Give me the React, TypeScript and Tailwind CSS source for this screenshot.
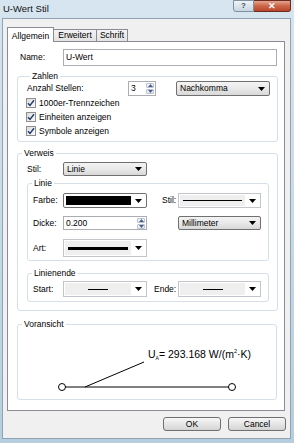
import React from "react";

// Small black triangle used by the drop-down boxes
const Arrow = () => (
  <svg width="7" height="4" viewBox="0 0 7 4" className="shrink-0">
    <polygon points="0,0 7,0 3.5,4" fill="#000" />
  </svg>
);

const SpinArrow = ({ up }: { up?: boolean }) => (
  <svg width="5" height="3" viewBox="0 0 5 3">
    <polygon points={up ? "0,3 5,3 2.5,0" : "0,0 5,0 2.5,3"} fill="#4d6185" />
  </svg>
);

const Combo = ({ text, className }: { text: string; className: string }) => (
  <div
    className={`flex items-center justify-between rounded-[2px] border border-[#707070] bg-gradient-to-b from-[#f3f3f3] via-[#e9e9e9] to-[#d8d8d8] pl-[3px] pr-[4px] ${className}`}
  >
    <span>{text}</span>
    <Arrow />
  </div>
);

const LineCombo = ({ className, thick }: { className: string; thick?: boolean }) => (
  <div className={`flex items-center border border-[#c2c5ca] bg-white p-[1px] ${className}`}>
    <div className="flex h-full flex-1 items-center justify-center bg-[#efefef] px-[3px]">
      <div className={`w-full bg-black ${thick ? "h-[3px]" : "h-px"}`} />
    </div>
    <div className="flex w-[14px] justify-center">
      <Arrow />
    </div>
  </div>
);

const EndCombo = ({ className }: { className: string }) => (
  <div className={`flex items-center border border-[#c2c5ca] bg-white p-[1px] ${className}`}>
    <div className="flex h-full flex-1 items-center justify-center bg-[#efefef]">
      <div className="h-px w-[20px] bg-black" />
    </div>
    <div className="flex w-[14px] justify-center">
      <Arrow />
    </div>
  </div>
);

const Spin = ({ value, className }: { value: string; className: string }) => (
  <div className={`flex items-stretch border border-[#abadb3] bg-white ${className}`}>
    <span className="flex flex-1 items-center pl-[2px]">{value}</span>
    <div className="flex w-[10px] flex-col gap-px p-px">
      <div className="flex flex-1 items-center justify-center rounded-[1px] border border-[#b9c4d3] bg-gradient-to-b from-[#f7f9fb] to-[#e3e9f0]">
        <SpinArrow up />
      </div>
      <div className="flex flex-1 items-center justify-center rounded-[1px] border border-[#b9c4d3] bg-gradient-to-b from-[#f7f9fb] to-[#e3e9f0]">
        <SpinArrow />
      </div>
    </div>
  </div>
);

const Check = ({ label }: { label: string }) => (
  <div className="flex h-[14px] items-center gap-[3px]">
    <div className="flex h-[10px] w-[10px] items-center justify-center border border-[#8f8f8f] bg-gradient-to-br from-[#dcdcdc] to-[#fbfbfb]">
      <svg width="8" height="8" viewBox="0 0 8 8">
        <path d="M1 4.2 L3 6.4 L7 1.2" stroke="#1f3a6e" strokeWidth="1.4" fill="none" />
      </svg>
    </div>
    <span>{label}</span>
  </div>
);

const Group = ({
  title,
  className,
  children,
}: {
  title: string;
  className: string;
  children: React.ReactNode;
}) => (
  <fieldset className={`rounded-[3px] border border-[#d5dfe5] ${className}`}>
    <legend className="ml-[4px] px-[2px] leading-[10px]">{title}</legend>
    {children}
  </fieldset>
);

const Button = ({ text }: { text: string }) => (
  <div className="flex h-[14px] w-[58px] items-center justify-center rounded-[3px] border border-[#707070] bg-gradient-to-b from-[#f6f6f6] via-[#e6e6e6] to-[#d3d3d3]">
    {text}
  </div>
);

export default function App() {
  return (
    <div className="flex h-[443px] w-[294px] flex-col overflow-hidden bg-gradient-to-b from-[#d6e5ef] via-[#c6dae7] to-[#b6cedd] font-['Liberation_Sans',Arial,sans-serif] text-[8.5px] text-black">
      {/* Title bar */}
      <div className="flex h-[18px] shrink-0 items-start justify-between">
        <span className="pl-[3px] pt-[3px] text-[9.5px] leading-[11px] text-[#111]">U-Wert Stil</span>
        <div className="mr-[3px] flex">
          <div className="flex h-[12px] w-[21px] items-center justify-center rounded-bl-[3px] border border-[#7f8f9d] bg-gradient-to-b from-[#eef3f7] to-[#c9d6e0] text-[8px] font-bold leading-none text-[#3c4c5c]">
            ?
          </div>
          <div className="flex h-[12px] w-[37px] items-center justify-center rounded-br-[3px] border border-l-0 border-[#6d2a1e] bg-gradient-to-b from-[#e3a48f] via-[#cc6448] to-[#b8472c] text-[9px] font-bold leading-none text-white">
            ✕
          </div>
        </div>
      </div>

      {/* Client area */}
      <div className="mb-[4px] ml-[2px] mr-[3px] flex flex-1 flex-col border border-[#8fa3b4] bg-[#f0f0f0] pl-[4px] pr-[5px]">
        {/* Tabs */}
        <div className="mt-[8px] flex h-[14px] items-end">
          <div className="relative z-10 -mb-px flex h-[15px] w-[47px] items-start justify-center border border-b-0 border-[#898c95] bg-white pt-[2px]">
            Allgemein
          </div>
          <div className="flex h-[12px] w-[43px] items-center justify-center border border-b-0 border-l-0 border-[#898c95] bg-gradient-to-b from-[#f3f3f3] to-[#e3e3e3]">
            Erweitert
          </div>
          <div className="flex h-[12px] w-[31px] items-center justify-center border border-b-0 border-l-0 border-[#898c95] bg-gradient-to-b from-[#f3f3f3] to-[#e3e3e3]">
            Schrift
          </div>
        </div>

        {/* Tab page */}
        <div className="flex h-[370px] flex-col border border-[#898c95] bg-white pl-[9px] pr-[6px]">
          {/* Name */}
          <div className="mt-[7px] flex h-[17px] items-center">
            <span className="w-[46px] pl-[3px]">Name:</span>
            <div className="mr-px flex h-full flex-1 items-center border border-[#abadb3] pl-[2px]">U-Wert</div>
          </div>

          {/* Zahlen */}
          <Group title="Zahlen" className="mt-[5px] pb-[3px] pl-[8px]">
            <div className="flex h-[15px] items-center">
              <span className="w-[102px] pl-px">Anzahl Stellen:</span>
              <Spin value="3" className="h-full w-[28px]" />
              <Combo text="Nachkomma" className="ml-[20px] h-full w-[94px]" />
            </div>
            <Check label="1000er-Trennzeichen" />
            <Check label="Einheiten anzeigen" />
            <Check label="Symbole anzeigen" />
          </Group>

          {/* Verweis */}
          <Group title="Verweis" className="mt-[6px] pb-[8px]">
            <div className="mt-[4px] flex h-[14px] items-center">
              <span className="w-[45px] pl-[9px]">Stil:</span>
              <Combo text="Linie" className="h-full w-[84px]" />
            </div>

            <Group title="Linie" className="ml-[9px] mr-[8px] mt-[2px] pb-[3px]">
              <div className="mt-[5px] flex h-[15px] items-center">
                <span className="w-[35px] pl-[5px]">Farbe:</span>
                <div className="flex h-full w-[84px] items-center rounded-[2px] border border-[#707070] bg-white p-[2px] pr-[4px]">
                  <div className="h-full flex-1 bg-black" />
                  <div className="ml-[4px]">
                    <Arrow />
                  </div>
                </div>
                <span className="ml-[15px] w-[16px]">Stil:</span>
                <LineCombo className="h-full w-[83px]" />
              </div>
              <div className="mt-[8px] flex h-[14px] items-center">
                <span className="w-[35px] pl-[5px]">Dicke:</span>
                <Spin value="0.200" className="h-full w-[84px]" />
                <Combo text="Millimeter" className="ml-[31px] h-full w-[83px]" />
              </div>
              <div className="mt-[9px] flex h-[18px] items-center">
                <span className="w-[35px] pl-[5px]">Art:</span>
                <LineCombo thick className="h-full w-[84px]" />
              </div>
            </Group>

            <Group title="Linienende" className="ml-[9px] mr-[8px] mt-[7px] pb-[4px]">
              <div className="mt-[3px] flex h-[16px] items-center">
                <span className="w-[35px] pl-[5px]">Start:</span>
                <EndCombo className="h-full w-[84px]" />
                <span className="ml-[7px] w-[24px]">Ende:</span>
                <EndCombo className="h-full w-[83px]" />
              </div>
            </Group>
          </Group>

          {/* Voransicht */}
          <Group title="Voransicht" className="mt-[8px] mr-px">
            <svg width="258" height="70" viewBox="0 0 258 70" className="block">
              <line x1="44" y1="58" x2="214" y2="58" stroke="#000" strokeWidth="1" />
              <line x1="67" y1="58" x2="126" y2="33" stroke="#000" strokeWidth="1" />
              <circle cx="44" cy="58" r="3.5" fill="#fff" stroke="#000" strokeWidth="1" />
              <circle cx="214" cy="58" r="3.5" fill="#fff" stroke="#000" strokeWidth="1" />
              <text x="130" y="29" fontSize="10.5" fontFamily="Liberation Sans, Arial, sans-serif" fill="#000">
                U
                <tspan fontSize="5" dy="2">A</tspan>
                <tspan dy="-2">= 293.168 W/(m</tspan>
                <tspan fontSize="5.5" dy="-5">2</tspan>
                <tspan dy="5">·K)</tspan>
              </text>
            </svg>
          </Group>
        </div>

        {/* Buttons */}
        <div className="mr-[-1px] mt-[6px] flex justify-end gap-[7px]">
          <Button text="OK" />
          <Button text="Cancel" />
        </div>
      </div>
    </div>
  );
}
